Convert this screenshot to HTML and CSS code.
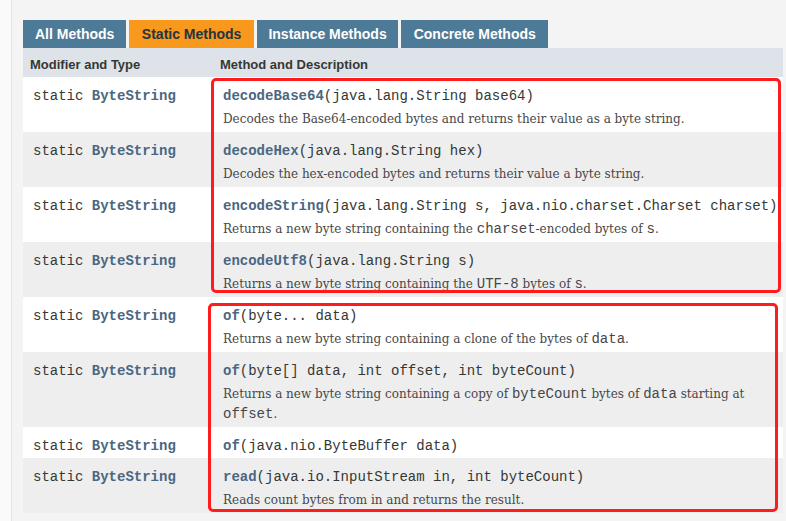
FILE: index.html
```html
<!DOCTYPE html>
<html>
<head>
<meta charset="utf-8">
<link rel="stylesheet" href="styles.css">
</head>
<body>
<div class="page">
  <div class="edge"></div>
  <main class="content">
    <div class="summary">
      <div class="tabs">
        <span class="tab">All Methods</span>
        <span class="tab active">Static Methods</span>
        <span class="tab">Instance Methods</span>
        <span class="tab">Concrete Methods</span>
      </div>
      <table class="methods">
        <colgroup><col class="c1"><col class="c2"></colgroup>
        <thead>
          <tr><th>Modifier and Type</th><th>Method and Description</th></tr>
        </thead>
        <tbody>
          <tr class="row">
            <td class="type"><code>static <a>ByteString</a></code></td>
            <td class="desc"><div class="sig"><code><a>decodeBase64</a>(java.lang.String&nbsp;base64)</code></div>
              <div class="block">Decodes the Base64-encoded bytes and returns their value as a byte string.</div></td>
          </tr>
          <tr class="row alt">
            <td class="type"><code>static <a>ByteString</a></code></td>
            <td class="desc"><div class="sig"><code><a>decodeHex</a>(java.lang.String&nbsp;hex)</code></div>
              <div class="block">Decodes the hex-encoded bytes and returns their value a byte string.</div></td>
          </tr>
          <tr class="row">
            <td class="type"><code>static <a>ByteString</a></code></td>
            <td class="desc"><div class="sig"><code><a>encodeString</a>(java.lang.String&nbsp;s, java.nio.charset.Charset&nbsp;charset)</code></div>
              <div class="block">Returns a new byte string containing the <code>charset</code>-encoded bytes of <code>s</code>.</div></td>
          </tr>
          <tr class="row alt">
            <td class="type"><code>static <a>ByteString</a></code></td>
            <td class="desc"><div class="sig"><code><a>encodeUtf8</a>(java.lang.String&nbsp;s)</code></div>
              <div class="block">Returns a new byte string containing the <code>UTF-8</code> bytes of <code>s</code>.</div></td>
          </tr>
          <tr class="row">
            <td class="type"><code>static <a>ByteString</a></code></td>
            <td class="desc"><div class="sig"><code><a>of</a>(byte...&nbsp;data)</code></div>
              <div class="block">Returns a new byte string containing a clone of the bytes of <code>data</code>.</div></td>
          </tr>
          <tr class="row alt">
            <td class="type"><code>static <a>ByteString</a></code></td>
            <td class="desc"><div class="sig"><code><a>of</a>(byte[]&nbsp;data, int&nbsp;offset, int&nbsp;byteCount)</code></div>
              <div class="block">Returns a new byte string containing a copy of <code>byteCount</code> bytes of <code>data</code> starting at <code>offset</code>.</div></td>
          </tr>
          <tr class="row">
            <td class="type"><code>static <a>ByteString</a></code></td>
            <td class="desc"><div class="sig"><code><a>of</a>(java.nio.ByteBuffer&nbsp;data)</code></div></td>
          </tr>
          <tr class="row alt">
            <td class="type"><code>static <a>ByteString</a></code></td>
            <td class="desc"><div class="sig"><code><a>read</a>(java.io.InputStream&nbsp;in, int&nbsp;byteCount)</code></div>
              <div class="block">Reads count bytes from in and returns the result.</div></td>
          </tr>
        </tbody>
      </table>
      <div class="mark mark-a"></div>
      <div class="mark mark-b"></div>
    </div>
  </main>
</div>
</body>
</html>
```

FILE: styles.css
```css
html, body {
  margin: 0;
  padding: 0;
  background: #f4f4f4;
}
body {
  font-family: "Liberation Sans", Arial, sans-serif;
  color: #353833;
}
.page {
  display: flex;
  min-height: 521px;
}
.edge {
  width: 11px;
  flex: none;
  background: #fafafa;
  border-right: 1px solid #e4e4e4;
}
.content {
  flex: 1;
  padding: 20px 0 0 11px;
}
.summary {
  position: relative;
  width: 760px;
}
.tabs {
  display: flex;
  gap: 3px;
  height: 28px;
}
.tab {
  display: block;
  padding: 0 12px;
  line-height: 28px;
  font-size: 14px;
  font-weight: bold;
  color: #ffffff;
  background: #4d7a97;
}
.tab.active {
  background: #f8981d;
  color: #253441;
  padding: 0 12.5px;
}
.tab:nth-child(3) {
  padding: 0 11.5px;
}
.tab:last-child {
  padding: 0 12.5px;
}
.methods {
  width: 760px;
  border-collapse: collapse;
  table-layout: fixed;
}
.c1 { width: 190px; }
.c2 { width: 570px; }
.methods th {
  background: #dee3e9;
  text-align: left;
  font-size: 13px;
  font-weight: bold;
  line-height: 15px;
  padding: 9px 3px 5px 7px;
  color: #353833;
}
.row { background: #ffffff; }
.row.alt { background: #eeeeef; }
.methods td {
  vertical-align: top;
  padding: 8px 3px 3px 10px;
  font-size: 14px;
  line-height: 20px;
}
code {
  font-family: "Liberation Mono", "DejaVu Sans Mono", monospace;
  font-size: 14px;
  line-height: 1;
}
.type code, .sig code {
  white-space: nowrap;
  color: #353833;
}
.type, .sig {
  line-height: 20px;
  height: 20px;
}
a {
  color: #4a6782;
  font-weight: bold;
  text-decoration: none;
}
.block {
  margin-top: 4px;
  font-family: "DejaVu Serif", Georgia, serif;
  font-size: 12px;
  line-height: 20px;
  color: #474747;
}
.block code {
  color: #474747;
}
.mark {
  position: absolute;
  border: 3px solid #ff1c1c;
  border-radius: 5px;
  box-sizing: border-box;
  pointer-events: none;
}
.mark-a {
  left: 188px;
  top: 58px;
  width: 570px;
  height: 215px;
}
.mark-b {
  left: 185px;
  top: 283px;
  width: 570px;
  height: 209px;
}
```
